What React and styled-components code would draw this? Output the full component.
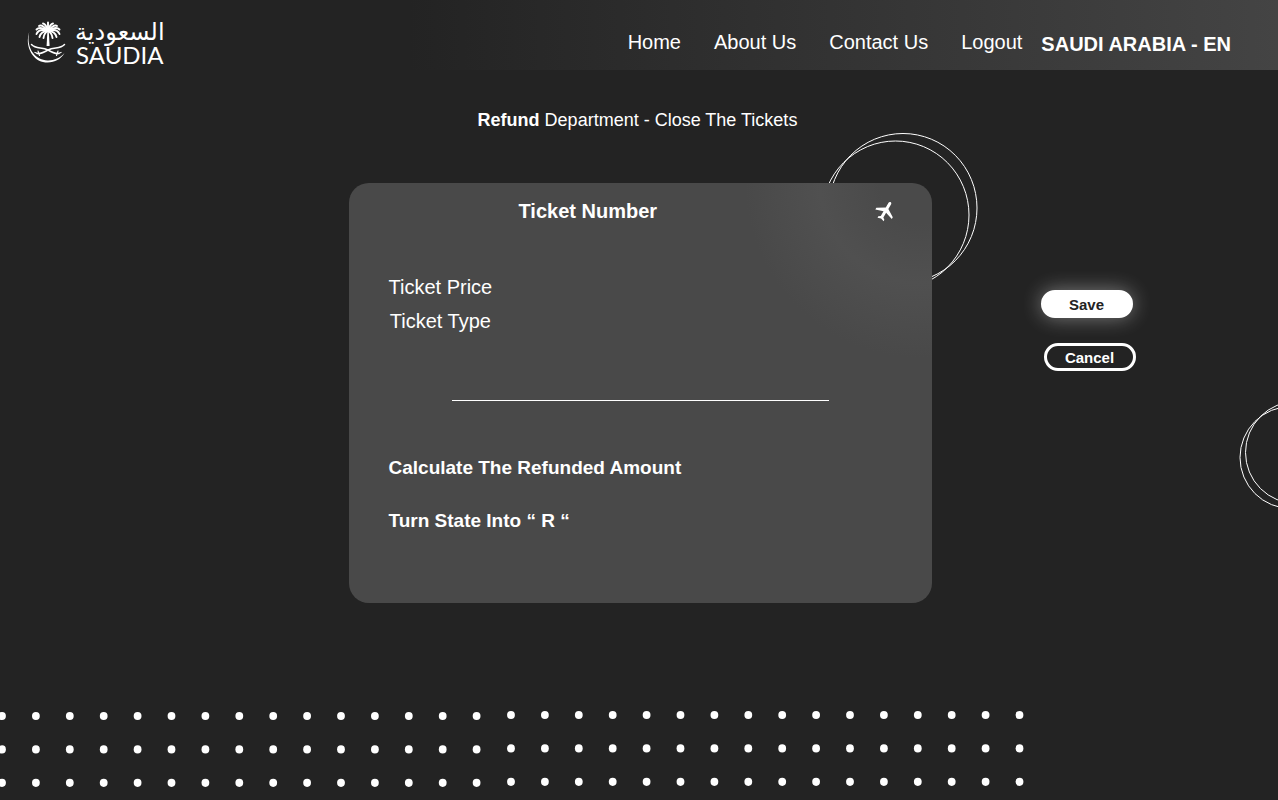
import React from "react";
import styled, { createGlobalStyle } from "styled-components";
import { MdFlight } from "react-icons/md";

const GlobalStyle = createGlobalStyle`
  * { box-sizing: border-box; }
  body {
    margin: 0;
    background: #232323;
    color: #fff;
    font-family: "Liberation Sans", "DejaVu Sans", sans-serif;
  }
`;

const Page = styled.div`
  position: relative;
  display: flex;
  flex-direction: column;
  min-height: 100vh;
  overflow: hidden;
`;

const Header = styled.header`
  display: flex;
  align-items: center;
  justify-content: space-between;
  min-height: 70px;
  padding: 14px 47px 0 26px;
  background: linear-gradient(90deg, #232323 32%, #444444 100%);
`;

const Brand = styled.a`
  display: flex;
  align-items: center;
  gap: 8px;
  padding-top: 2px;
  color: #fff;
  text-decoration: none;
`;

const Wordmark = styled.span`
  display: flex;
  flex-direction: column;
  align-items: center;
`;

const ArabicName = styled.span`
  font: 24px/24px "DejaVu Sans", sans-serif;
`;

const LatinName = styled.span`
  font: 24px/22px Lato, sans-serif;
`;

const Nav = styled.nav`
  display: flex;
  align-items: center;
  gap: 33px;
`;

const NavLink = styled.a`
  color: #fff;
  font-size: 20px;
  line-height: 24px;
  text-decoration: none;
`;

const Menu = styled.div`
  display: flex;
  align-items: center;
  gap: 19px;
`;

const Locale = styled.a`
  padding-top: 4px;
  color: #fff;
  font-size: 20px;
  font-weight: 700;
  line-height: 24px;
  text-decoration: none;
`;

const Title = styled.h1`
  margin: 38px 0 51px;
  padding-right: 3px;
  font-size: 18px;
  font-weight: 400;
  line-height: 24px;
  text-align: center;
`;

const Content = styled.main`
  display: grid;
  grid-template-columns: 1fr minmax(0, 583px) 1fr;
  padding-left: 2px;
`;

const CardArea = styled.div`
  position: relative;
  grid-column: 2;
`;

const CardRings = styled.svg`
  position: absolute;
  top: -51px;
  right: -48px;
`;

const EdgeRings = styled.svg`
  position: absolute;
  top: 400px;
  right: 0;
`;

const Card = styled.section`
  position: relative;
  min-height: 420px;
  padding: 16px 40px 40px;
  border-radius: 20px;
  background: radial-gradient(circle at 98% 0, #4a4a4a 0, #4a4a4a 40px, #505050 100px, #494949 175px);
`;

const CardHeader = styled.div`
  display: flex;
  align-items: center;
  justify-content: space-between;
  margin-right: -6px;
  padding-left: 130px;
`;

const CardTitle = styled.h2`
  margin: 0;
  font-size: 20px;
  line-height: 24px;
`;

const Plane = styled(MdFlight)`
  width: 24px;
  height: 24px;
  transform: rotate(30deg);
`;

const Fields = styled.div`
  display: grid;
  gap: 10px;
  justify-items: center;
  width: max-content;
  margin-top: 52px;
  font-size: 20px;
  line-height: 24px;
`;

const Divider = styled.hr`
  width: 377px;
  max-width: 100%;
  height: 1px;
  margin: 67px auto 55px;
  border: 0;
  background: #fff;
`;

const Step = styled.p`
  margin: 0 0 29px;
  font-size: 19px;
  font-weight: 700;
  line-height: 24px;
`;

const Actions = styled.div`
  display: flex;
  flex-direction: column;
  gap: 25px;
  padding: 107px 0 0 109px;
`;

const Button = styled.button`
  width: 92px;
  height: 28px;
  padding: 2px 0 0;
  border: 3px solid #fff;
  border-radius: 14px;
  background: ${(p) => (p.$primary ? "#fff" : "transparent")};
  color: ${(p) => (p.$primary ? "#232323" : "#fff")};
  box-shadow: ${(p) => (p.$primary ? "0 0 20px rgba(255, 255, 255, 0.4)" : "none")};
  margin-left: ${(p) => (p.$primary ? "0" : "3px")};
  font: 700 15px/20px "Liberation Sans", sans-serif;
  cursor: pointer;
`;

const Footer = styled.footer`
  display: flex;
  margin-top: auto;
  overflow: hidden;
`;

const DotBlock = styled.svg`
  flex: none;
  display: block;
`;

function Dots({ columns, width, startX, startY }) {
  const dots = [];
  for (let row = 0; row < 3; row++) {
    for (let col = 0; col < columns; col++) {
      dots.push(
        <ellipse key={`${row}-${col}`} cx={startX + col * 33.9} cy={startY + row * 33.4} rx="3.9" ry="4.1" />
      );
    }
  }
  return (
    <DotBlock width={width} height="90" fill="#fff" aria-hidden="true">
      {dots}
    </DotBlock>
  );
}

function Emblem() {
  return (
    <svg width="41" height="44" viewBox="0 0 41 44" fill="none" stroke="#fff" strokeLinecap="round" aria-hidden="true">
      <path d="M3.2 11C-1.5 24 6 41.5 21.5 41.5C29 41.5 35 38 38.5 32C34 37 28 39.6 21.5 39.4C8 39 0 26 3.2 11Z" fill="#fff" stroke="none" />
      <path d="M21.4 10L20.6 25H23.6L22.8 10Z" fill="#fff" stroke="none" />
      <g strokeWidth="1.9">
        <path d="M22 10Q14 5 10.5 8.5" />
        <path d="M22 10Q13 7 10.5 13" />
        <path d="M22 10Q15 10 13.5 16" />
        <path d="M22 10Q18 12 17.5 17" />
        <path d="M22 10Q16 3 13 5" />
        <path d="M22 10Q20 3 17 2.5" />
        <path d="M22 10V1.5" />
        <path d="M22 10Q24 3 27 2.5" />
        <path d="M22 10Q28 3 31 5" />
        <path d="M22 10Q30 5 33.5 8.5" />
        <path d="M22 10Q31 7 33.5 13" />
        <path d="M22 10Q29 10 30.5 16" />
        <path d="M22 10Q26 12 26.5 17" />
      </g>
      <g strokeWidth="1.5">
        <path d="M5.5 23.5C10 28.5 16 25.5 22 29C26 31.5 29 33 33 32.5" />
        <path d="M38.5 23.5C34 28.5 28 25.5 22 29C18 31.5 15 33 11 32.5" />
      </g>
      <path d="M12 30L13.5 34.5M32 30L30.5 34.5" strokeWidth="1.1" />
      <path d="M9 31.5L12 32.5M35 31.5L32 32.5" strokeWidth="1.3" />
    </svg>
  );
}

export default function App() {
  return (
    <>
      <GlobalStyle />
      <Page>
        <Header>
          <Brand href="#" aria-label="Saudia">
            <Emblem />
            <Wordmark>
              <ArabicName lang="ar">السعودية</ArabicName>
              <LatinName>SAUDIA</LatinName>
            </Wordmark>
          </Brand>
          <Menu>
            <Nav>
              <NavLink href="#">Home</NavLink>
              <NavLink href="#">About Us</NavLink>
              <NavLink href="#">Contact Us</NavLink>
              <NavLink href="#">Logout</NavLink>
            </Nav>
            <Locale href="#">SAUDI ARABIA - EN</Locale>
          </Menu>
        </Header>
        <Title>
          <strong>Refund</strong> Department - Close The Tickets
        </Title>
        <Content>
          <CardArea>
            <CardRings width="154" height="162" fill="none" stroke="#fff" aria-hidden="true">
              <ellipse cx="77" cy="76" rx="74" ry="74.5" />
              <ellipse cx="69.5" cy="83" rx="73.5" ry="74" />
            </CardRings>
            <Card>
              <CardHeader>
                <CardTitle>Ticket Number</CardTitle>
                <Plane aria-hidden="true" />
              </CardHeader>
              <Fields>
                <span>Ticket Price</span>
                <span>Ticket Type</span>
              </Fields>
              <Divider />
              <Step>Calculate The Refunded Amount</Step>
              <Step>Turn State Into “ R “</Step>
            </Card>
          </CardArea>
          <Actions>
            <Button type="button" $primary>Save</Button>
            <Button type="button">Cancel</Button>
          </Actions>
        </Content>
        <Footer>
          <Dots columns={15} width={494} startX={2} startY={6} />
          <Dots columns={16} width={540} startX={17} startY={5} />
        </Footer>
        <EdgeRings width="39" height="112" fill="none" stroke="#fff" aria-hidden="true">
          <circle cx="52" cy="57.5" r="51" />
          <circle cx="57.5" cy="52.5" r="51" />
        </EdgeRings>
      </Page>
    </>
  );
}
